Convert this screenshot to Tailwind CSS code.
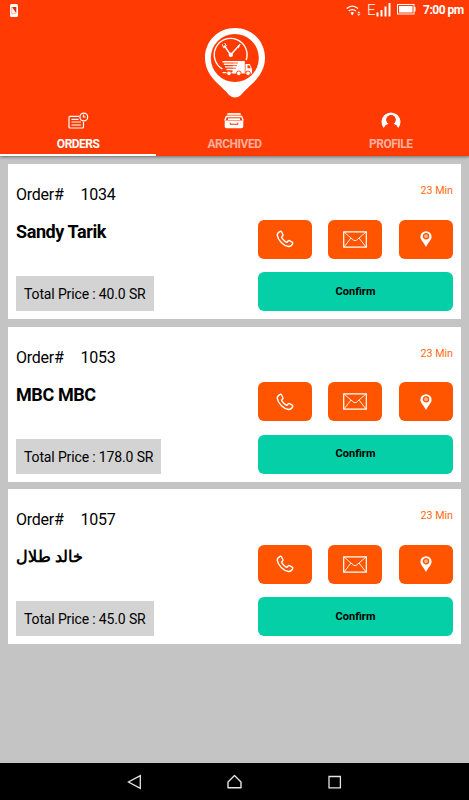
<!DOCTYPE html>
<html lang="en">
<head>
  <meta charset="UTF-8" />
  <meta name="viewport" content="width=device-width, initial-scale=1.0" />
  <title>Orders</title>
  <script src="https://cdn.jsdelivr.net/npm/@tailwindcss/browser@4"></script>
</head>
<body class="bg-[#c4c4c4] text-black font-['Roboto','Noto_Sans',sans-serif]">
  <div class="h-[800px] w-[469px] flex flex-col overflow-hidden">
    <header class="relative h-[156px] shrink-0 bg-[#ff3a03] text-white shadow-[0_1px_3px_rgba(0,0,0,0.45)] flex flex-col">
      <!-- Status bar -->
      <div class="h-5 flex items-center pl-[10px] pr-[5px]">
        <svg class="w-2 h-[13px]" viewBox="0 0 8 13">
          <rect width="8" height="13" rx="1.5" fill="#fff" />
          <path d="M2 3h4.300v6.300z" fill="#e02a00" />
          <path d="M1.700 3v6.300h4.500" fill="none" stroke="#ff9c80" stroke-width=".7" />
        </svg>
        <svg class="ml-auto w-[15px] h-3" viewBox="0 0 15 12" fill="none" stroke="#fff" stroke-width="1.3">
          <path d="M.7 4.500Q6.200-.3 12 4.500M2.700 7Q6.200 4.100 10 7" />
          <path d="M4.500 8.800Q6.200 7.400 8 8.800L6.200 11.500z" fill="#fff" stroke="none" />
          <path d="M12.800 7.500l1.700 1.700h-3.400zM12.800 11.800l1.700-1.600h-3.400z" fill="#fff" stroke="none" />
        </svg>
        <span class="ml-[6px] w-[9px] text-[15px] leading-5 font-light">E</span>
        <svg class="w-[15px] h-[14px]" viewBox="0 0 15 14" fill="#fff">
          <path d="M.5 9.500h2V13.500h-2zM4.500 7h2v6.500h-2zM8.500 3.500h2v10h-2zM12.500 0h2v13.500h-2z" />
        </svg>
        <svg class="ml-[6px] w-[19px] h-[11px] -mt-[2px]" viewBox="0 0 19 11">
          <rect x=".5" y=".5" width="16.500" height="9.500" fill="none" stroke="#fff" />
          <path d="M2 2h13.500v6.500H2zM17 3h1.500v4.500H17z" fill="#fff" />
        </svg>
        <span class="ml-[7px] w-[41px] text-[12px] leading-5 font-bold tracking-[-0.5px] whitespace-nowrap">7:00 pm</span>
      </div>

      <!-- Logo -->
      <div class="h-[84px] flex justify-center pt-[7px]">
        <svg class="w-[62px] h-[72px]" viewBox="0 0 62 72">
          <path d="M31 1C14 1 1 14 1 31c0 10 5 18 12 25 4 4 8 7 12 12q6 5 12 0c4-5 8-8 12-12 7-7 12-15 12-25C61 14 48 1 31 1z" fill="#fff" />
          <circle cx="30.800" cy="31" r="24" fill="#ff3a03" />
          <path d="M18.500 42A16.400 16.400 0 1 1 42.200 33" fill="none" stroke="#fff" stroke-width="1.400" />
          <path d="M20.500 19l5.500 8M35 18.500l-7.500 8.500" fill="none" stroke="#fff" stroke-width="1.400" stroke-linecap="round" />
          <path d="M18.300 17.300l1.300 3.500 2.800-1.700-1.700-3.100" fill="none" stroke="#fff" stroke-width="1" />
          <path d="M33.300 20.300l2.500-3.500.8.700-2.300 4z" fill="#fff" />
          <circle cx="26.800" cy="27.800" r="2.200" fill="#fff" />
          <path d="M28.500 34h12.300v12.500H28.500zM41.500 37h4.300l2.200 5v4.500h-6.500z" fill="#fff" />
          <path d="M18.500 34h10.500v1.500H18.500zM19.800 36.600h10v1.400h-10zM21 39.200h9v1.400h-9zM22.500 41.800h8v1.400h-8zM18.500 45h12v1.200h-12z" fill="#fff" />
          <path d="M28 36h6M28 38.600h5M28 41.200h4" stroke="#ff3a03" stroke-width=".8" />
          <path d="M43.500 38.300h1.900l1.300 3h-3.200z" fill="#ff3a03" />
          <g fill="#fff" stroke="#ff3a03" stroke-width=".9">
            <circle cx="25" cy="46.300" r="2.300" />
            <circle cx="34.800" cy="46.300" r="2.300" />
            <circle cx="44" cy="46.300" r="2.300" />
          </g>
        </svg>
      </div>

      <!-- Tabs -->
      <nav class="grid grid-cols-3 h-[52px] text-[12px] leading-4 font-bold tracking-[-0.5px]">
        <a class="flex flex-col items-center border-b-2 border-white pt-[6px]">
          <svg class="w-[22px] h-[22px]" viewBox="0 0 22 22" fill="none" stroke="#fff" stroke-width="1.200">
            <path d="M12 6.300H3q-1 0-1 1v9.700q0 1 1 1H15.500q1 0 1-1V12M4.500 9.300h7M4.500 12h9.500M4.500 15h9.500" />
            <circle cx="16.800" cy="7" r="3.900" />
            <path d="M16.500 4.500V7h2.200" />
          </svg>
          <span class="mt-[4px]">ORDERS</span>
        </a>
        <a class="flex flex-col items-center pt-[6px]">
          <svg class="w-[22px] h-[22px]" viewBox="0 0 22 22">
            <path d="M5 3h12l1.500 2.500h-15zM4 6.300h14V7.500H4z" fill="#ffb09a" />
            <path d="M4.500 3.800h13M3.500 6.300h15" stroke="#fff" stroke-width="1.200" />
            <path d="M3.500 6L1.800 10.500M18.500 6l1.700 4.500" stroke="#fff" stroke-width="1.400" />
            <path d="M5 8.300h12V10H5z" fill="#fff" />
            <path d="M1.700 10.500h18.600v6q0 1.800-1.800 1.800h-15q-1.800 0-1.800-1.800z" fill="#fff" />
            <path d="M7.300 12.800v1.400h7.400v-1.400" fill="none" stroke="#ff3a03" stroke-width="1.100" />
          </svg>
          <span class="mt-[4px] text-[#ffb09a]">ARCHIVED</span>
        </a>
        <a class="flex flex-col items-center pt-[6px]">
          <svg class="w-[22px] h-[22px]" viewBox="0 0 22 22">
            <path d="M3.700 18A9.500 9.500 0 1 1 18.300 18Q17 14.700 13.500 13.800A4.700 4.700 0 1 0 8.500 13.800Q5 14.700 3.700 18z" fill="#fff" />
            <circle cx="11" cy="9.800" r="4.500" fill="#ff3a03" />
          </svg>
          <span class="mt-[4px] text-[#ffb09a]">PROFILE</span>
        </a>
      </nav>
    </header>

    <main id="orders" class="grow px-2 pt-2 flex flex-col gap-[7.5px]"></main>

    <!-- Navigation bar -->
    <footer class="h-[37px] shrink-0 bg-black flex justify-center gap-[84px] items-center text-[#e4e4e4]">
      <svg class="w-4 h-4" viewBox="0 0 16 16" fill="none" stroke="currentColor" stroke-width="1.300"><path d="M13.300 1.700v12.600L1.500 8z" /></svg>
      <svg class="w-4 h-4" viewBox="0 0 16 16" fill="none" stroke="currentColor" stroke-width="1.400"><path d="M7.500 1.500L1 8v5.800h13V8z" stroke-linejoin="round" /></svg>
      <svg class="w-4 h-4" viewBox="0 0 16 16" fill="none" stroke="currentColor" stroke-width="1.300"><path d="M2 2.500h11.400v11.300H2z" /></svg>
    </footer>
  </div>

  <script>
    const orders = [
      { number: 1034, name: "Sandy Tarik", price: "40.0", time: "23 Min" },
      { number: 1053, name: "MBC MBC", price: "178.0", time: "23 Min" },
      { number: 1057, name: "خالد طلال", price: "45.0", time: "23 Min", rtl: true },
    ];

    const phoneIcon = `
      <svg class="w-[18px] h-[18px]" viewBox="0 0 18 18" fill="none" stroke="#fff" stroke-width="1.4" stroke-linejoin="round">
        <path d="M4.200 1.300Q1 2.700 1.300 5.300C2 10 7.500 15.800 12.500 16.500Q15.500 16.700 16.700 13.600Q17 12.700 16.200 12.200L13.500 10.600Q12.600 10.200 12 11L11 12.200Q10 12.300 7.800 10.200Q5.700 8.300 5.600 6.900L6.600 6Q7.300 5.300 6.900 4.500L5.500 1.800Q5 1 4.200 1.300z" />
      </svg>`;

    const mailIcon = `
      <svg class="w-6 h-[17px]" viewBox="0 0 24 17" fill="none" stroke="#fff">
        <path d="M.7.800h22.600v15.400H.7z" stroke-width="1.200" />
        <path d="M1 1l9.500 8.200q1.500 1 3 0L23 1M1 16l7-9M23 16l-7-9" stroke-width=".9" />
      </svg>`;

    const pinIcon = `
      <svg class="w-3 h-4" viewBox="0 0 12 16">
        <path d="M6 .2A5.600 5.600 0 0 0 .4 5.800C.4 9 3.500 11 6 16C8.500 11 11.600 9 11.600 5.800A5.600 5.600 0 0 0 6 .2z" fill="#fff" />
        <circle cx="6" cy="5.200" r="2.600" fill="#ffb080" stroke="#ff5500" stroke-width="1.300" />
      </svg>`;

    function renderButton(icon) {
      return `<button class="w-[54.500px] h-[39px] rounded-md bg-[#ff5500] flex items-center justify-center">${icon}</button>`;
    }

    function renderOrder(order) {
      const nameClass = order.rtl ? "text-[16px]" : "text-[18px] tracking-[-0.4px]";
      return `
        <article class="h-[155px] shrink-0 bg-white px-2 flex justify-between">
          <div class="flex flex-col items-start pt-[19px]">
            <p class="flex gap-[17px] text-[16px] tracking-[-0.25px] leading-6"><span>Order#</span><span>${order.number}</span></p>
            <h2 class="mt-[13px] h-6 leading-6 font-bold ${nameClass}">${order.name}</h2>
            <p class="mt-8 h-[35px] bg-[#d3d3d3] px-2 text-[14px] tracking-[-0.14px] leading-[37px] whitespace-nowrap">Total Price : ${order.price} SR</p>
          </div>
          <div class="w-[195px] flex flex-col pt-[19px]">
            <p class="text-right text-[10.7px] leading-4 text-[#ff6a10]">${order.time}</p>
            <div class="mt-[20.500px] flex gap-[16.500px]">
              ${renderButton(phoneIcon)}
              ${renderButton(mailIcon)}
              <div class="ml-auto">${renderButton(pinIcon)}</div>
            </div>
            <button class="mt-[13.500px] h-[39px] rounded-md bg-[#04cfa6] pt-px text-[11px] font-bold">Confirm</button>
          </div>
        </article>
      `;
    }

    document.getElementById("orders").innerHTML = orders.map(renderOrder).join("");
  </script>
</body>
</html>
